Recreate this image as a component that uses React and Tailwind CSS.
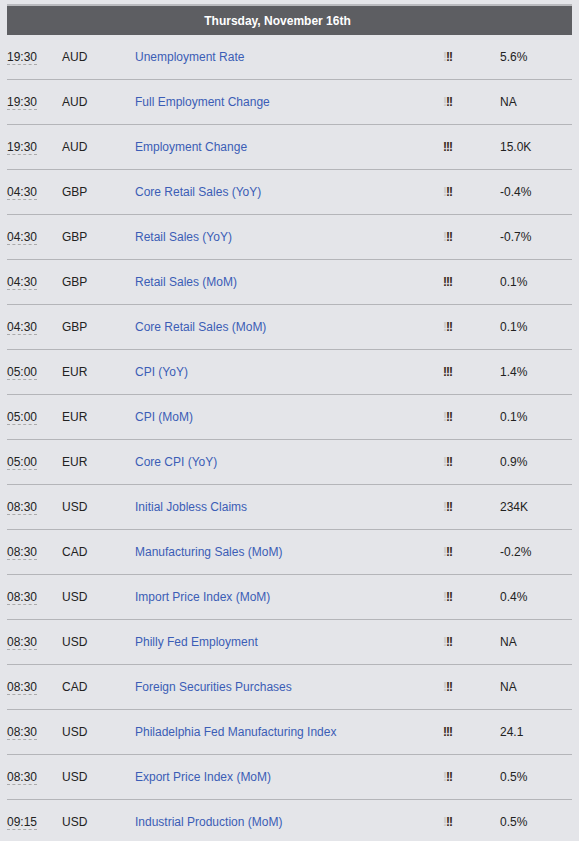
const events = [
  ["19:30", "AUD", "Unemployment Rate", 2, "5.6%"],
  ["19:30", "AUD", "Full Employment Change", 2, "NA"],
  ["19:30", "AUD", "Employment Change", 3, "15.0K"],
  ["04:30", "GBP", "Core Retail Sales (YoY)", 2, "-0.4%"],
  ["04:30", "GBP", "Retail Sales (YoY)", 2, "-0.7%"],
  ["04:30", "GBP", "Retail Sales (MoM)", 3, "0.1%"],
  ["04:30", "GBP", "Core Retail Sales (MoM)", 2, "0.1%"],
  ["05:00", "EUR", "CPI (YoY)", 3, "1.4%"],
  ["05:00", "EUR", "CPI (MoM)", 2, "0.1%"],
  ["05:00", "EUR", "Core CPI (YoY)", 2, "0.9%"],
  ["08:30", "USD", "Initial Jobless Claims", 2, "234K"],
  ["08:30", "CAD", "Manufacturing Sales (MoM)", 2, "-0.2%"],
  ["08:30", "USD", "Import Price Index (MoM)", 2, "0.4%"],
  ["08:30", "USD", "Philly Fed Employment", 2, "NA"],
  ["08:30", "CAD", "Foreign Securities Purchases", 2, "NA"],
  ["08:30", "USD", "Philadelphia Fed Manufacturing Index", 3, "24.1"],
  ["08:30", "USD", "Export Price Index (MoM)", 2, "0.5%"],
  ["09:15", "USD", "Industrial Production (MoM)", 2, "0.5%"],
];

function Importance({ level }) {
  return (
    <span className="font-bold tracking-[-1px]">
      {[1, 2, 3].map((i) => (
        <span key={i} className={4 - i <= level ? "text-[#3a2a22]" : "text-[#c9c9c9]"}>
          !
        </span>
      ))}
    </span>
  );
}

export default function App() {
  return (
    <div className="min-h-[841px] bg-[#e4e5e9] px-[7px] pt-1 font-['Liberation_Sans',Arial,sans-serif] text-[12px] text-[#222]">
      <div className="border-t-2 border-[#b9babe] bg-[#5d5e62] h-[31px] flex items-center justify-center pr-[24px] text-white font-bold">
        Thursday, November 16th
      </div>
      {events.map(([time, cur, name, lvl, actual], i) => (
        <div key={i} className="flex items-center h-[45px] border-b border-[#b4b5b9]">
          <span className="w-[55px]">
            <abbr className="no-underline border-b border-dashed border-[#aaa] leading-[13px]">{time}</abbr>
          </span>
          <span className="w-[73px]">{cur}</span>
          <a className="w-[308px] text-[#3b5db6]">{name}</a>
          <span className="w-[57px]">
            <Importance level={lvl} />
          </span>
          <span>{actual}</span>
        </div>
      ))}
    </div>
  );
}
